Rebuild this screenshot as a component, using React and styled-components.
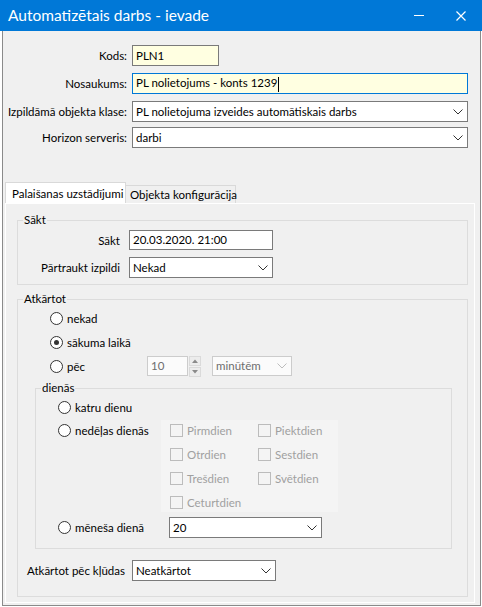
import React from 'react';
import styled, { createGlobalStyle } from 'styled-components';

const Global = createGlobalStyle`
  html, body { margin: 0; padding: 0; background: #fff; }
  body {
    font-family: Lato, "Noto Sans", sans-serif;
    font-size: 11.5px;
    color: #000;
  }
  * { box-sizing: border-box; }
`;

const Window = styled.div`
  width: 482px;
  height: 607px;
  display: flex;
  flex-direction: column;
  background: #fff;
`;

const TitleBar = styled.div`
  height: 31px;
  flex-shrink: 0;
  background: #0078d7;
  color: #fff;
  display: flex;
  align-items: center;
  padding-left: 8px;
`;

const Title = styled.div`
  flex: 1;
  font-size: 15.5px;
  line-height: 31px;
`;

const TitleButton = styled.div`
  width: 42px;
  height: 31px;
  display: flex;
  align-items: center;
  justify-content: center;
`;

const Frame = styled.div`
  flex: 1;
  margin: 0 1px 1px 2px;
  border: 1px solid #8a8a8a;
  border-top: none;
  background: #f0f0f0;
  display: flex;
  flex-direction: column;
`;

const Form = styled.div`
  display: flex;
  flex-direction: column;
  padding: 14px 12px 0 0;
`;

const FormRow = styled.div`
  display: grid;
  grid-template-columns: 124px 1fr;
  column-gap: 5px;
  align-items: center;
  margin-top: ${(p) => p.$mt || 0}px;
`;

const Label = styled.div`
  text-align: ${(p) => p.$align || 'right'};
  white-space: nowrap;
`;

const Field = styled.div`
  height: ${(p) => p.$h || 21}px;
  width: ${(p) => (p.$w ? `${p.$w}px` : '100%')};
  border: 1px solid ${(p) => (p.$focus ? '#0078d7' : p.$disabled ? '#cccccc' : '#7a7a7a')};
  background: ${(p) => p.$bg || '#fff'};
  color: ${(p) => (p.$disabled ? '#6d6d6d' : '#000')};
  display: flex;
  align-items: center;
  padding: 0 4px 0 3px;
  white-space: nowrap;
  overflow: hidden;
`;

const FieldText = styled.span`
  flex: 1;
  line-height: 16px;
`;

const Caret = styled.span`
  display: inline-block;
  width: 1px;
  height: 15px;
  background: #000;
  vertical-align: middle;
  margin-left: 1px;
`;

const Chevron = ({ color = '#333' }) => (
  <svg width="10" height="6" viewBox="0 0 10 6">
    <polyline points="0.5,0.5 5,5 9.5,0.5" fill="none" stroke={color} strokeWidth="1" />
  </svg>
);

const Select = ({ value, w, h, disabled }) => (
  <Field $w={w} $h={h} $disabled={disabled} $bg={disabled ? '#fbfbfb' : '#fff'}>
    <FieldText>{value}</FieldText>
    <Chevron color={disabled ? '#bdbdbd' : '#333'} />
  </Field>
);

const TabStrip = styled.div`
  display: flex;
  align-items: flex-end;
  height: 21px;
  margin: 34px 0 0 2px;
`;

const Tab = styled.div`
  height: ${(p) => (p.$active ? 21 : 18)}px;
  width: ${(p) => p.$w}px;
  padding: 0 ${(p) => (p.$active ? 6 : 4)}px;
  border: 1px solid #d9d9d9;
  border-bottom: none;
  ${(p) => (!p.$active ? 'border-left: none;' : '')}
  background: ${(p) => (p.$active ? '#fff' : '#f0f0f0')};
  display: flex;
  align-items: center;
  white-space: nowrap;
`;

const Panel = styled.div`
  flex: 1;
  margin: 0 5px 2px 2px;
  border: 1px solid #fff;
  padding: 9px 6px 0 11px;
  display: flex;
  flex-direction: column;
`;

const Group = styled.fieldset`
  margin: ${(p) => p.$m || '0'};
  padding: ${(p) => p.$pad || '0'};
  border: 1px solid #dcdcdc;
  min-width: 0;
`;

const Legend = styled.legend`
  padding: 0 1px;
  margin-left: 5px;
  line-height: 14px;
  font-size: 11.5px;
`;

const StartGrid = styled.div`
  display: grid;
  grid-template-columns: 102px 144px;
  column-gap: 9px;
  row-gap: 7px;
  align-items: center;
`;

const RadioRow = styled.div`
  display: flex;
  align-items: ${(p) => p.$align || 'center'};
  height: ${(p) => (p.$h ? `${p.$h}px` : 'auto')};
  padding-left: ${(p) => p.$pl || 0}px;
  margin-top: ${(p) => p.$mt || 0}px;
`;

const RadioOption = styled.div`
  display: flex;
  align-items: center;
  height: ${(p) => p.$h || 20}px;
  width: ${(p) => (p.$w ? `${p.$w}px` : 'auto')};
  flex-shrink: 0;
  white-space: nowrap;
`;

const RadioCircle = styled.span`
  width: 13px;
  height: 13px;
  border-radius: 50%;
  border: 1px solid #333;
  background: #fff;
  margin-right: 4px;
  display: flex;
  align-items: center;
  justify-content: center;
  flex-shrink: 0;
  &::after {
    content: '';
    width: 5px;
    height: 5px;
    border-radius: 50%;
    background: ${(p) => (p.$checked ? '#333' : 'transparent')};
  }
`;

const Radio = ({ label, checked, w }) => (
  <RadioOption $w={w}>
    <RadioCircle $checked={checked} />
    {label}
  </RadioOption>
);

const SpinButtons = styled.div`
  display: flex;
  flex-direction: column;
  gap: 1px;
  margin-left: 1px;
`;

const SpinButton = styled.div`
  width: 12px;
  height: 10px;
  border: 1px solid #dadada;
  background: #ececec;
  display: flex;
  align-items: center;
  justify-content: center;
`;

const Arrow = ({ up }) => (
  <svg width="6" height="4" viewBox="0 0 6 4">
    <polygon points={up ? '0,4 3,0.5 6,4' : '0,0 3,3.5 6,0'} fill="#8a8a8a" />
  </svg>
);

const Spacer = styled.div`
  width: ${(p) => p.$w}px;
  flex-shrink: 0;
`;

const DaysPanel = styled.div`
  width: 177px;
  background: #f4f4f4;
  display: grid;
  grid-template-columns: 88px 88px;
  grid-template-rows: repeat(4, 20px);
  grid-auto-flow: column;
  row-gap: 4px;
  padding-left: 9px;
`;

const CheckOption = styled.div`
  display: flex;
  align-items: center;
  color: #a0a0a0;
  white-space: nowrap;
`;

const CheckBox = styled.span`
  width: 13px;
  height: 13px;
  border: 1px solid #bcbcbc;
  margin-right: 4px;
  flex-shrink: 0;
`;

const ErrorRow = styled.div`
  display: grid;
  grid-template-columns: 105px 144px;
  align-items: center;
  margin-top: 11px;
  padding-left: 9px;
`;

const days = ['Pirmdien', 'Otrdien', 'Trešdien', 'Ceturtdien', 'Piektdien', 'Sestdien', 'Svētdien'];

export default function App() {
  return (
    <>
      <Global />
      <Window>
        <TitleBar>
          <Title>Automatizētais darbs - ievade</Title>
          <TitleButton>
            <svg width="10" height="1" viewBox="0 0 10 1">
              <rect width="10" height="1" fill="#fff" />
            </svg>
          </TitleButton>
          <TitleButton>
            <svg width="10" height="10" viewBox="0 0 10 10">
              <path d="M0.5 0.5 L9.5 9.5 M9.5 0.5 L0.5 9.5" stroke="#fff" strokeWidth="1.2" />
            </svg>
          </TitleButton>
        </TitleBar>
        <Frame>
          <Form>
            <FormRow>
              <Label>Kods:</Label>
              <Field $w={87} $bg="#ffffe1">
                <FieldText>PLN1</FieldText>
              </Field>
            </FormRow>
            <FormRow $mt={7}>
              <Label>Nosaukums:</Label>
              <Field $bg="#ffffe1" $focus>
                <FieldText>
                  PL nolietojums - konts 1239
                  <Caret />
                </FieldText>
              </Field>
            </FormRow>
            <FormRow $mt={7}>
              <Label>Izpildāmā objekta klase:</Label>
              <Select value="PL nolietojuma izveides automātiskais darbs" />
            </FormRow>
            <FormRow $mt={5}>
              <Label>Horizon serveris:</Label>
              <Select value="darbi" />
            </FormRow>
          </Form>

          <TabStrip>
            <Tab $active $w={121}>Palaišanas uzstādījumi</Tab>
            <Tab $w={110}>Objekta konfigurācija</Tab>
          </TabStrip>
          <Panel>
            <Group $pad="3px 0 6px 0">
              <Legend>Sākt</Legend>
              <StartGrid>
                <Label>Sākt</Label>
                <Field $h={20}>
                  <FieldText>20.03.2020. 21:00</FieldText>
                </Field>
                <Label>Pārtraukt izpildi</Label>
                <Select value="Nekad" />
              </StartGrid>
            </Group>

            <Group $m="7px 0 0 0" $pad="0 0 15px 0">
              <Legend>Atkārtot</Legend>
              <RadioRow $h={24} $pl={32}>
                <Radio label="nekad" />
              </RadioRow>
              <RadioRow $h={24} $pl={32}>
                <Radio label="sākuma laikā" checked />
              </RadioRow>
              <RadioRow $h={24} $pl={32}>
                <Radio label="pēc" w={97} />
                <Field $w={41} $h={20} $disabled $bg="#fbfbfb">
                  <FieldText>10</FieldText>
                </Field>
                <SpinButtons>
                  <SpinButton>
                    <Arrow up />
                  </SpinButton>
                  <SpinButton>
                    <Arrow />
                  </SpinButton>
                </SpinButtons>
                <Spacer $w={11} />
                <Select value="minūtēm" w={80} h={20} disabled />
              </RadioRow>

              <Group $m="3px 15px 0 17px" $pad="0 0 10px 0">
                <Legend>dienās</Legend>
                <RadioRow $h={25} $pl={22}>
                  <Radio label="katru dienu" />
                </RadioRow>
                <RadioRow $pl={22} $align="flex-start">
                  <Radio label="nedēļas dienās" w={103} />
                  <DaysPanel>
                    {days.map((d) => (
                      <CheckOption key={d}>
                        <CheckBox />
                        {d}
                      </CheckOption>
                    ))}
                  </DaysPanel>
                </RadioRow>
                <RadioRow $pl={22} $mt={5}>
                  <Radio label="mēneša dienā" w={111} />
                  <Select value="20" w={153} />
                </RadioRow>
              </Group>

              <ErrorRow>
                <Label $align="left">Atkārtot pēc kļūdas</Label>
                <Select value="Neatkārtot" />
              </ErrorRow>
            </Group>
          </Panel>
        </Frame>
      </Window>
    </>
  );
}
